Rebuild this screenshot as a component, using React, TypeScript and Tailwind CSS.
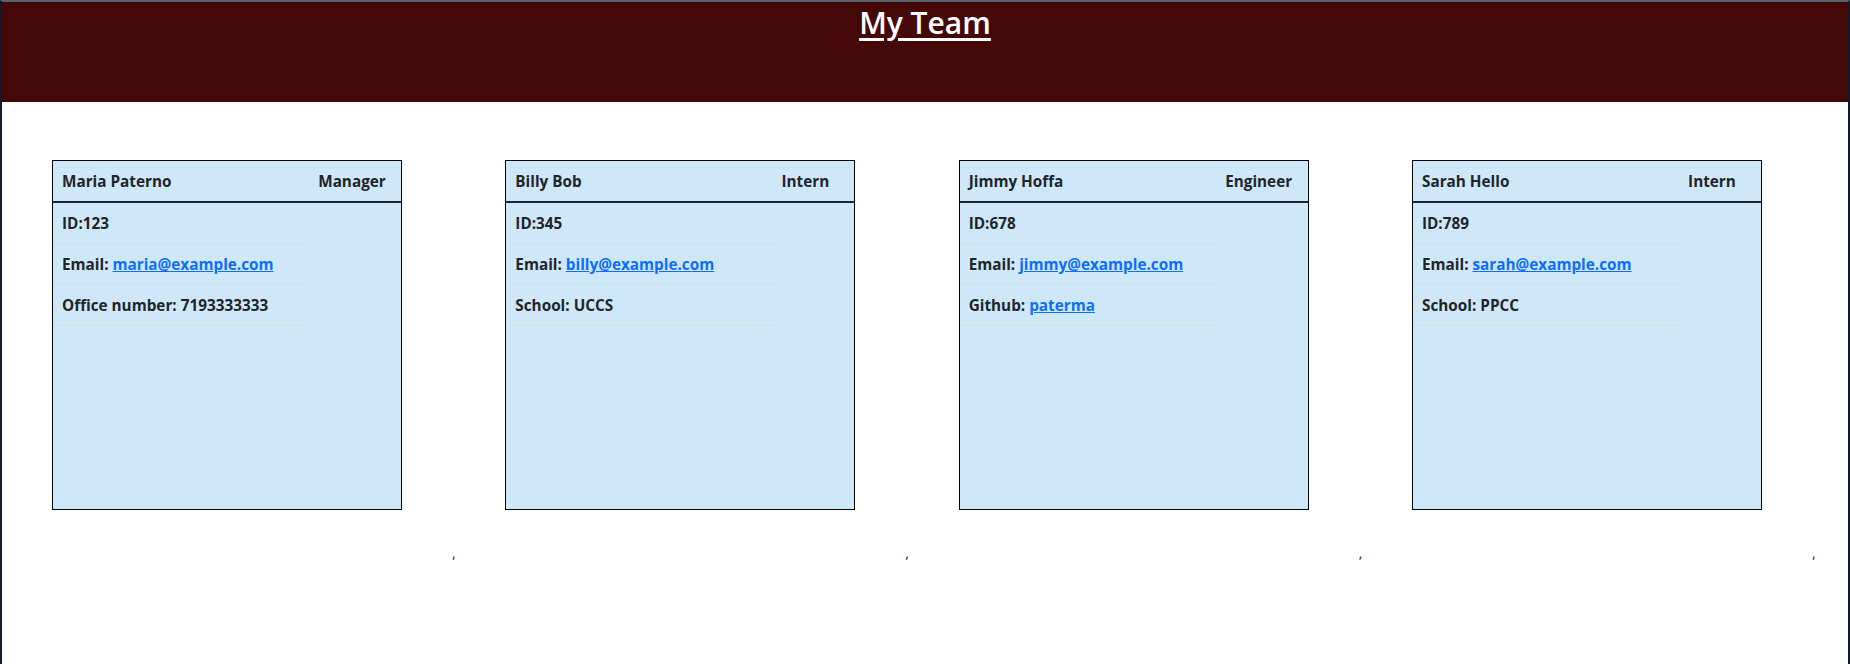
import React from "react";

type Member = {
  name: string;
  role: string;
  id: string;
  email: string;
  extraLabel: string;
  extraValue: string;
  extraLink?: boolean;
  listW: string;
};

const members: Member[] = [
  { name: "Maria Paterno", role: "Manager", id: "123", email: "maria@example.com", extraLabel: "Office number:", extraValue: "7193333333", listW: "w-[254px]" },
  { name: "Billy Bob", role: "Intern", id: "345", email: "billy@example.com", extraLabel: "School:", extraValue: "UCCS", listW: "w-[269px]" },
  { name: "Jimmy Hoffa", role: "Engineer", id: "678", email: "jimmy@example.com", extraLabel: "Github:", extraValue: "paterma", extraLink: true, listW: "w-[257px]" },
  { name: "Sarah Hello", role: "Intern", id: "789", email: "sarah@example.com", extraLabel: "School:", extraValue: "PPCC", listW: "w-[273px]" },
];

function Card({ m }: { m: Member }) {
  return (
    <div className="m-[50px] flex h-[350px] w-[350px] shrink-0 flex-col border border-black bg-[#cfe8f9] text-[15.3px] font-bold text-[#212529]">
      <div className="flex h-[42px] items-center border-b-2 border-[#212529] pl-[9px] pt-px">
        <span className="flex-1">{m.name}</span>
        <span className="w-[98px] text-center">{m.role}</span>
      </div>
      <ul className={`${m.listW} flex flex-col`}>
        <li className="flex h-[41px] items-center border-b border-[#d6dde3] pl-[9px] pt-px">ID:{m.id}</li>
        <li className="flex h-[41px] items-center border-b border-[#d6dde3] pl-[9px] pt-px">
          Email:&nbsp;<a href="#" className="text-[#0d6efd] underline">{m.email}</a>
        </li>
        <li className="flex h-[41px] items-center border-b border-[#d6dde3] pl-[9px] pt-px">
          {m.extraLabel}&nbsp;
          {m.extraLink ? (
            <a href="#" className="text-[#0d6efd] underline">{m.extraValue}</a>
          ) : (
            <span>{m.extraValue}</span>
          )}
        </li>
      </ul>
    </div>
  );
}

export default function App() {
  return (
    <div
      className="h-[664px] w-full overflow-hidden border-x-2 border-t-2 border-l-[#0f1b2b] border-r-[#0f1b2b] border-t-[#56616c] bg-white"
      style={{ fontFamily: '"Open Sans", "Noto Sans", sans-serif' }}
    >
      <header className="h-[100px] bg-[#450808] text-center">
        <h1 className="pt-[3px] text-[30px] font-semibold leading-[36px] text-white underline decoration-[3px] underline-offset-[4px]">
          My Team
        </h1>
      </header>
      <main className="flex items-end pt-[8px]">
        {members.map((m) => (
          <div key={m.id} className="flex items-end">
            <Card m={m} />
            <span className="w-[3.33px] text-[14px] leading-none text-[#212529]">,</span>
          </div>
        ))}
      </main>
    </div>
  );
}
